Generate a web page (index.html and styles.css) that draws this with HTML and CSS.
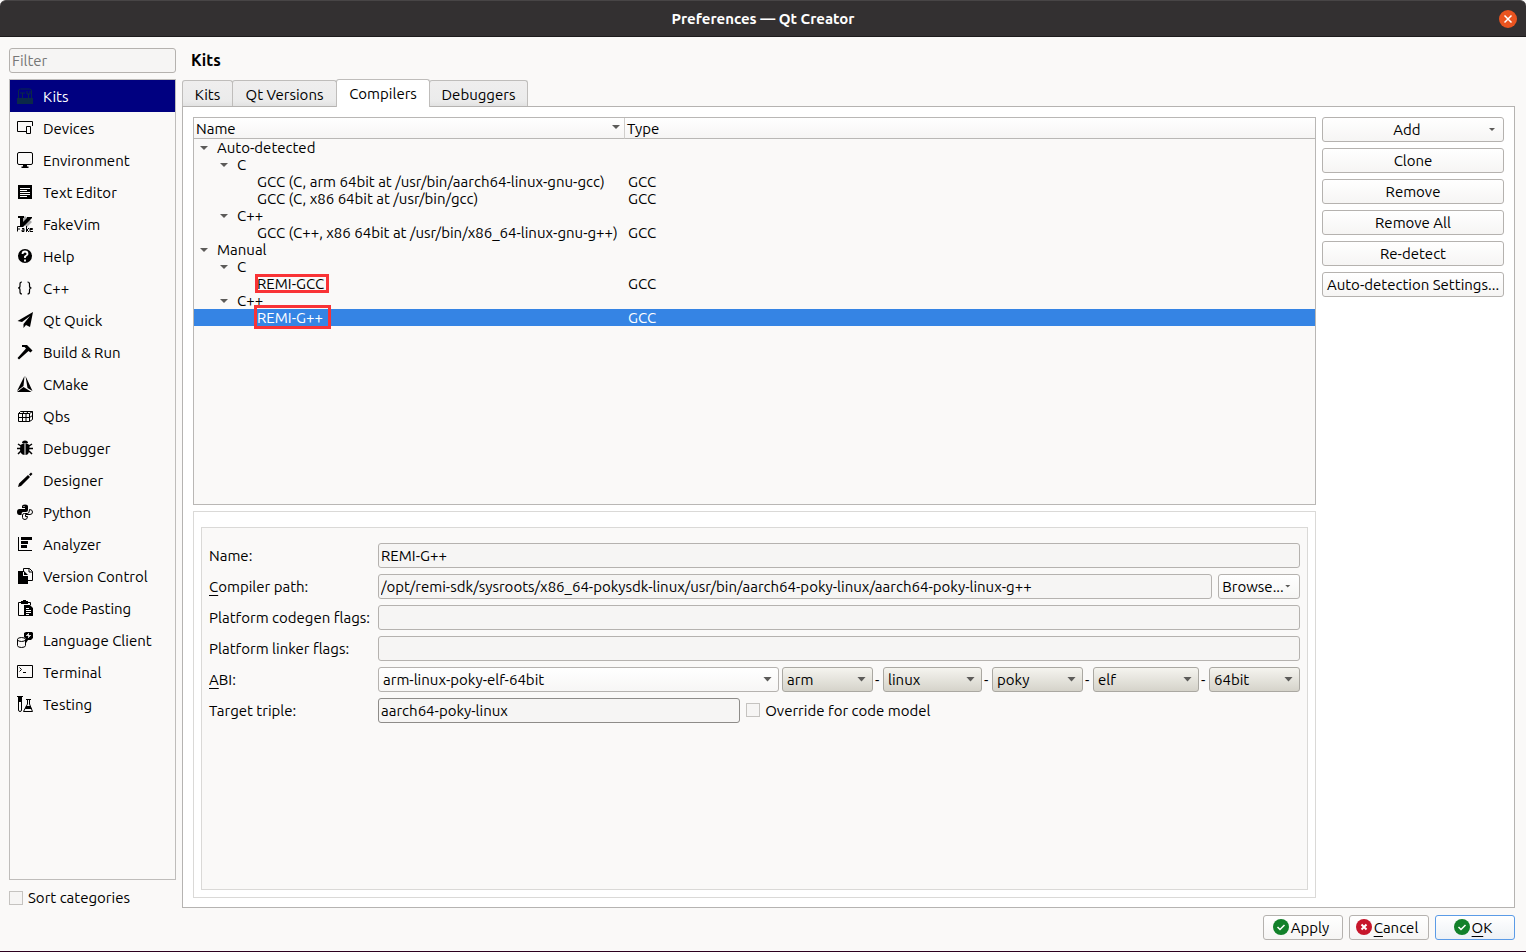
FILE: index.html
```html
<!DOCTYPE html>
<html lang="en">
<head>
<meta charset="utf-8">
<title>Preferences — Qt Creator</title>
<link rel="stylesheet" href="styles.css">
</head>
<body>
<div class="window">
  <header class="titlebar">
    <h1 class="window-title">Preferences — Qt Creator</h1>
    <button class="close" aria-label="Close"><svg viewBox="0 0 18 18"><path d="M5.500 5.500l7 7M12.500 5.500l-7 7" stroke="#fff" stroke-width="1.500"/></svg></button>
  </header>
  <div class="content">
    <aside class="sidebar">
      <input class="field filter" type="text" placeholder="Filter" aria-label="Filter">
      <nav class="categories">
        <button class="category current"><svg viewBox="0 0 16 16" fill="none" stroke="#0b2848"><path d="M1.500 11V3q0-2 2-2h9q2 0 2 2v8M3 5h5M5.500 5v6M10 3v3h3V3M11.500 6v5"/><path d="M0 10h16v6H0z" fill="#0b2848" stroke="none"/></svg>Kits</button>
        <button class="category"><svg viewBox="0 0 16 16" fill="none" stroke="#000"><path d="M9 11.500H.500v-10h15V6"/><path d="M9.500 6.500h4v7h-4z"/></svg>Devices</button>
        <button class="category"><svg viewBox="0 0 16 16" fill="none" stroke="#000"><rect x=".5" y=".5" width="15" height="12" rx="1.500"/><path d="M6 13h4v1.500h1.500V16h-7v-1.500H6z" fill="#000" stroke="none"/></svg>Environment</button>
        <button class="category"><svg viewBox="0 0 16 16"><path d="M1 1h14v14H1z"/><path d="M3 4.500h10M3 6.500h7M3 8.500h10M3 10.500h10M3 12.500h7" stroke="#fff"/></svg>Text Editor</button>
        <button class="category"><svg viewBox="0 0 16 16"><path d="M8 0l7 6-5 5-7-5z" fill="#aaa"/><path d="M1 0h6v2H6v4l4-4V1h5v1L6 11H3V2H1z"/><path d="M.500 15.500v-5H4M.500 13H3M5 12.500h2v3H5V14h2M9.500 10v6M12 12l-2 2 2 2M13 13.500h2.500v-1H13v3h3" fill="none" stroke="#000"/></svg>FakeVim</button>
        <button class="category"><svg viewBox="0 0 16 16"><circle cx="8" cy="8" r="7"/><path d="M5.500 6q0-2.500 2.500-2.500T10.500 6Q10.500 7 8 8.500V10M8 11.500v2" fill="none" stroke="#fff" stroke-width="1.800"/></svg>Help</button>
        <button class="category"><svg viewBox="0 0 16 16" fill="none" stroke="#000" stroke-width="1.200"><path d="M5 2Q3 2 3 4v2q0 2-2 2 2 0 2 2v2q0 2 2 2M10.500 2q2 0 2 2v2q0 2 2 2-2 0-2 2v2q0 2-2 2"/></svg>C++</button>
        <button class="category"><svg viewBox="0 0 16 16"><path d="M16 0L.500 9l4.500 1 8-6-6.500 8V16l2.500-3 4 2z"/></svg>Qt Quick</button>
        <button class="category"><svg viewBox="0 0 16 16"><path d="M5 1h5l5.500 5.500-2 2L11.500 7 2 15.500.500 14 9 4.500 7.500 3H5z"/></svg>Build &amp; Run</button>
        <button class="category"><svg viewBox="0 0 16 16"><path d="M7.500 0L0 15l6.500-5zM8.500 0l2 12 5 3zM0 16l6.500-5 8 5z"/></svg>CMake</button>
        <button class="category"><svg viewBox="0 0 16 16" fill="none" stroke="#000"><path d="M1.500 5.500h11v8h-11zM1.500 9.500h11M5.500 5.500v8M9 5.500v8M1.500 5.500L3.500 3.500h12l-3 2M6 5l1-1.500M10 5l1-1.500M15.500 3.500v8l-3 2M12.500 9.500l3-2"/></svg>Qbs</button>
        <button class="category"><svg viewBox="0 0 16 16"><path d="M5 3Q5 .500 8 .500T11 3zM3.500 5q3-2 4-2v12Q3 14.500 3 9zM8.500 3q1 0 4 2 .500 10-4 10z"/><path d="M1 4l3 2M0 8.500h4M1 14l3-3M15 4l-3 2M16 8.500h-4M15 14l-3-3" stroke="#000" stroke-width="1.500"/></svg>Debugger</button>
        <button class="category"><svg viewBox="0 0 16 16"><path d="M1 15l1-3.500 9-8.500 2 2-9 9zM12 2.500L14 .500 15.500 2l-2 2z"/></svg>Designer</button>
        <button class="category"><svg viewBox="0 0 16 16"><path d="M5 4V2.500Q5 .500 8 .500t3 2V6q0 2-2 2H6Q4.500 8 4.500 11H2.500Q0 11 0 8t2.500-3H8V4z"/><path d="M12.500 5.500q3 0 3 2.500t-2.500 2.500H8.500v2h2q0 3-2.500 3t-2.500-2V11q0-1.500 2-1.500h3q2 0 2-4z" fill="none" stroke="#000"/><path d="M6.500 2.500h1" stroke="#fff"/></svg>Python</button>
        <button class="category"><svg viewBox="0 0 16 16"><path d="M1 1h1v13h13v1H1zM4 1h11v3H4zM4 5h7v3H4zM4 9h6v3H4z"/></svg>Analyzer</button>
        <button class="category"><svg viewBox="0 0 16 16"><path d="M6.500 4V.500h6l3 3v9H11M12 .500V4h3.500" fill="none" stroke="#000"/><path d="M1 3h5v5h5v8H1zM7 3l4 4H7z"/></svg>Version Control</button>
        <button class="category"><svg viewBox="0 0 16 16"><path d="M7 15.500H1.500v-13h12V5" fill="none" stroke="#000"/><path d="M4 1h2V0h3v1h2v3H4zM7 5h6l3 3v8H7z"/><path d="M9 8.500h3M9 10.500h5M9 12.500h5M9 14.500h3" stroke="#fff"/></svg>Code Pasting</button>
        <button class="category"><svg viewBox="0 0 16 16"><path d="M.500 7.500v6q0 2 4 2t4-2v-6" fill="none" stroke="#000"/><ellipse cx="4.500" cy="7.500" rx="4" ry="2" fill="none" stroke="#000"/><path d="M7 1l2-1h6l1 1v5l-2 2h-3l-2 3V7L7 5z"/><path d="M11.500 1v5M9 3.500h5M10 2l3 3" stroke="#fff" stroke-width=".8"/></svg>Language Client</button>
        <button class="category"><svg viewBox="0 0 16 16" fill="none" stroke="#000"><path d="M.500 1.500h15v12H.500zM2.500 3.500l2 2-2 2M6 8.500h3"/></svg>Terminal</button>
        <button class="category"><svg viewBox="0 0 16 16" fill="none" stroke="#000"><path d="M0 .500h6M1.500 1v13q0 1.500 1.500 1.500t1.500-1.500V1M9 3.500h5M10.500 4v4l-4 7.500h9L12.500 8V4"/><path d="M1.500 1h3v5h-3zM9 10h4l2 3H8z" fill="#000" stroke="none"/></svg>Testing</button>
      </nav>
      <label class="check sort"><input type="checkbox">Sort categories</label>
    </aside>
    <main class="page">
      <h2 class="page-title">Kits</h2>
      <div class="tabs" role="tablist">
        <button class="tab tab-kits" role="tab">Kits</button>
        <button class="tab tab-versions" role="tab">Qt Versions</button>
        <button class="tab tab-compilers active" role="tab" aria-selected="true">Compilers</button>
        <button class="tab tab-debuggers" role="tab">Debuggers</button>
      </div>
      <section class="pane">
        <div class="left">
          <div class="tree">
            <table>
              <thead><tr><th class="name-col">Name<i class="arrow"></i></th><th>Type</th></tr></thead>
              <tbody>
                <tr><td class="level1"><i class="arrow"></i>Auto-detected</td><td></td></tr>
                <tr><td class="level2"><i class="arrow"></i>C</td><td></td></tr>
                <tr><td class="level3">GCC (C, arm 64bit at /usr/bin/aarch64-linux-gnu-gcc)</td><td>GCC</td></tr>
                <tr><td class="level3">GCC (C, x86 64bit at /usr/bin/gcc)</td><td>GCC</td></tr>
                <tr><td class="level2"><i class="arrow"></i>C++</td><td></td></tr>
                <tr><td class="level3">GCC (C++, x86 64bit at /usr/bin/x86_64-linux-gnu-g++)</td><td>GCC</td></tr>
                <tr><td class="level1"><i class="arrow"></i>Manual</td><td></td></tr>
                <tr><td class="level2"><i class="arrow"></i>C</td><td></td></tr>
                <tr><td class="level3"><span class="marked">REMI-GCC</span></td><td>GCC</td></tr>
                <tr><td class="level2"><i class="arrow"></i>C++</td><td></td></tr>
                <tr class="selected"><td class="level3"><span class="marked marked-large">REMI-G++</span></td><td>GCC</td></tr>
              </tbody>
            </table>
          </div>
          <div class="details">
            <form class="form">
              <label for="name">Name:</label>
              <input class="field" id="name" type="text" value="REMI-G++">
              <label for="path"><u>C</u>ompiler path:</label>
              <div class="line path-line">
                <input class="field" id="path" type="text" value="/opt/remi-sdk/sysroots/x86_64-pokysdk-linux/usr/bin/aarch64-poky-linux/aarch64-poky-linux-g++">
                <button class="button browse" type="button">Browse...<i class="arrow small"></i></button>
              </div>
              <label for="codegen">Platform codegen flags:</label>
              <input class="field" id="codegen" type="text">
              <label for="linker">Platform linker flags:</label>
              <input class="field" id="linker" type="text">
              <label for="abi"><u>A</u>BI:</label>
              <div class="line">
                <span class="combo combo-abi"><select id="abi"><option>arm-linux-poky-elf-64bit</option></select></span>
                <span class="combo part"><select aria-label="Architecture"><option>arm</option></select></span>
                <span class="dash">-</span>
                <span class="combo part part-os"><select aria-label="OS"><option>linux</option></select></span>
                <span class="dash">-</span>
                <span class="combo part"><select aria-label="OS flavor"><option>poky</option></select></span>
                <span class="dash">-</span>
                <span class="combo part part-format"><select aria-label="Binary format"><option>elf</option></select></span>
                <span class="dash">-</span>
                <span class="combo part"><select aria-label="Word width"><option>64bit</option></select></span>
              </div>
              <label for="triple">Target triple:</label>
              <div class="line triple-line">
                <input class="field strong" id="triple" type="text" value="aarch64-poky-linux">
                <label class="check"><input type="checkbox">Override for code model</label>
              </div>
            </form>
          </div>
        </div>
        <div class="actions">
          <button class="button add">Add<i class="arrow small"></i></button>
          <button class="button">Clone</button>
          <button class="button">Remove</button>
          <button class="button">Remove All</button>
          <button class="button">Re-detect</button>
          <button class="button">Auto-detection Settings...</button>
        </div>
      </section>
    </main>
  </div>
  <footer class="footer">
    <button class="button"><svg viewBox="0 0 16 16"><circle cx="8" cy="8" r="8" fill="#12812a"/><path d="M4.500 8L7 10.500 11.500 6" fill="none" stroke="#fff" stroke-width="1.500"/></svg>Apply</button>
    <button class="button"><svg viewBox="0 0 16 16"><circle cx="8" cy="8" r="8" fill="#c7162b"/><path d="M5.500 5.500l5 5M10.500 5.500l-5 5" stroke="#fff" stroke-width="2"/></svg><span><u>C</u>ancel</span></button>
    <button class="button default"><svg viewBox="0 0 16 16"><circle cx="8" cy="8" r="8" fill="#12812a"/><path d="M4.500 8L7 10.500 11.500 6" fill="none" stroke="#fff" stroke-width="1.500"/></svg><span><u>O</u>K</span></button>
  </footer>
</div>
</body>
</html>
```
FILE: styles.css
```css
* { box-sizing: border-box; }

body {
  margin: 0;
  background: #faf9f8;
  color: #000;
  font: 15px/17px Ubuntu, "Noto Sans", sans-serif;
}

button, input, select { font: inherit; color: inherit; margin: 0; }
u { text-underline-offset: 3px; }

.window {
  display: flex;
  flex-direction: column;
  min-height: 100vh;
  border-bottom: 1px solid #2c001e;
}

.titlebar {
  display: grid;
  grid-template-columns: 1fr auto 1fr;
  align-items: center;
  height: 37px;
  padding: 0 9px;
  background: #333031;
  border-top: 1px solid #484546;
  border-bottom: 1px solid #1d1b1c;
  border-radius: 6px 6px 0 0;
}
.window-title {
  grid-column: 2;
  margin: 0;
  color: #fff;
  font-size: 15px;
  font-weight: 700;
}
.close {
  justify-self: end;
  width: 18px;
  height: 18px;
  padding: 0;
  border: 0;
  border-radius: 50%;
  background: #e95420;
}
.close svg { display: block; }

.content {
  flex: 1;
  display: flex;
  gap: 6px;
  padding: 11px 11px 0 9px;
}

.sidebar {
  display: flex;
  flex-direction: column;
  width: 167px;
}
.field {
  width: 100%;
  height: 25px;
  padding: 0 2px;
  border: 1px solid #b5b2af;
  border-radius: 3px;
  background: #f6f5f4;
  outline: 0;
}
.field.strong { border-color: #8e8c89; }
.field::placeholder { color: #777; opacity: 1; }
.categories {
  flex: 1;
  display: flex;
  flex-direction: column;
  margin-top: 6px;
  border: 1px solid #bfbdbb;
}
.category {
  display: flex;
  align-items: center;
  gap: 10px;
  height: 32px;
  padding: 1px 7px 0;
  border: 0;
  background: none;
  text-align: left;
  white-space: nowrap;
}
.category svg { width: 16px; height: 16px; flex: none; margin-bottom: 1px; }
.category.current { background: #000080; color: #fff; }

.check {
  display: flex;
  align-items: center;
  gap: 5px;
}
.check input {
  appearance: none;
  width: 14px;
  height: 14px;
  border: 1px solid #c5c3c0;
  background: #f6f5f4;
}
.sort { height: 28px; padding-top: 7px; }

.page {
  flex: 1;
  display: flex;
  flex-direction: column;
  min-width: 0;
}
.page-title {
  margin: 0;
  padding: 0 9px;
  font-size: 16px;
  line-height: 24px;
}
.tabs {
  display: flex;
  align-items: flex-end;
  height: 34px;
}
.tab {
  height: 26px;
  margin-left: -1px;
  padding: 1px 0 0;
  border: 1px solid #bfbdbb;
  border-bottom: 0;
  border-radius: 3px 3px 0 0;
  background: linear-gradient(#efeeee, #ebebeb 80%, #e2e2e2);
}
.tab-kits { width: 51px; margin-left: 0; }
.tab-versions { width: 105px; }
.tab-compilers { width: 94px; }
.tab-debuggers { width: 99px; }
.tab.active {
  position: relative;
  height: 28px;
  margin-bottom: -1px;
  padding: 0;
  background: #fff;
}

.pane {
  flex: 1;
  display: flex;
  gap: 6px;
  padding: 10px 10px 9px;
  border: 1px solid #b5b3b1;
  background: #fff;
}
.left {
  flex: 1;
  display: grid;
  grid-template-rows: 1fr 1fr;
  gap: 6px;
  min-width: 0;
}
.tree {
  border: 1px solid #b9b7b5;
  background: #faf9f8;
}
.tree table {
  width: 100%;
  border-collapse: separate;
  border-spacing: 0;
  table-layout: fixed;
}
.tree th {
  height: 21px;
  padding: 1px 2px;
  border-bottom: 1px solid #b9b7b5;
  background: linear-gradient(#fff, #f6f5f4);
  font-weight: 400;
  text-align: left;
}
.tree th.name-col {
  position: relative;
  width: 431px;
  border-right: 1px solid #d0cecc;
}
.tree td {
  position: relative;
  height: 17px;
  padding: 0 3px;
  white-space: nowrap;
}
.tree .level1 { padding-left: 23px; }
.tree .level2 { padding-left: 43px; }
.tree .level3 { padding-left: 63px; }
.tree .selected { background: #3584e4; color: #fff; }

.arrow {
  display: inline-block;
  width: 8px;
  height: 4px;
  background: #5c5b59;
  clip-path: polygon(0 0, 100% 0, 50% 100%);
}
.arrow.small { width: 6px; height: 3px; }
.tree .arrow { position: absolute; top: 7px; }
.tree th .arrow { right: 4px; top: 7px; }
.tree .level1 .arrow { left: 6px; }
.tree .level2 .arrow { left: 26px; }

.marked { position: relative; }
.marked::after {
  content: "";
  position: absolute;
  inset: -1px -5px -1px -2px;
  border: 3px solid #f93336;
}
.marked-large::after { inset: -4px -8px -3px -3px; }

.details {
  display: flex;
  padding: 15px 7px 7px;
  border: 1px solid #dad9d7;
}
.form {
  flex: 1;
  display: grid;
  grid-template-columns: 163px 1fr;
  grid-auto-rows: 25px;
  gap: 6px;
  align-items: center;
  padding: 15px 7px;
  border: 1px solid #dad9d7;
  background: #faf9f8;
  white-space: nowrap;
}
.line { display: flex; align-items: center; }
.path-line { gap: 6px; }
.combo { position: relative; width: 91px; }
.combo::after {
  content: "";
  position: absolute;
  right: 7px;
  top: 10px;
  width: 9px;
  height: 5px;
  background: #5c5b59;
  clip-path: polygon(0 0, 100% 0, 50% 100%);
  pointer-events: none;
}
.combo select {
  appearance: none;
  display: block;
  width: 100%;
  height: 25px;
  padding: 0 4px;
  border: 1px solid #b5b2af;
  border-radius: 3px;
  background: linear-gradient(#fff, #f7f6f5);
}
.combo-abi { flex: 1; margin-right: 3px; }
.part select { background: linear-gradient(#f5f4ef, #d5d3ca); border-color: #aaa8a2; }
.part-os { width: 99px; }
.part-format { width: 106px; }
.dash { width: 10px; padding-left: 2px; }
.triple-line { gap: 6px; }
.triple-line .field { flex: 357 1 0; min-width: 0; }
.triple-line .check { flex: 555 1 0; }

.actions {
  display: flex;
  flex-direction: column;
  gap: 6px;
  width: 182px;
}
.button {
  display: flex;
  align-items: center;
  justify-content: center;
  height: 25px;
  padding: 0;
  border: 1px solid #b5b2af;
  border-radius: 3px;
  background: linear-gradient(#fff, #f6f5f4);
  white-space: nowrap;
}
.add {
  display: grid;
  grid-template-columns: 10px 1fr 22px;
  justify-items: center;
}
.add::before { content: ""; }
.browse { width: 82px; flex: none; gap: 1px; padding-right: 5px; }

.footer {
  display: flex;
  justify-content: flex-end;
  gap: 6px;
  padding: 7px 11px 11px;
}
.footer .button { width: 80px; gap: 2px; padding-right: 4px; }
.footer svg { width: 16px; height: 16px; margin-bottom: 1px; }
.footer .default {
  border-color: #5b9be6;
  background: linear-gradient(#fff, #edf1f5);
}
```
